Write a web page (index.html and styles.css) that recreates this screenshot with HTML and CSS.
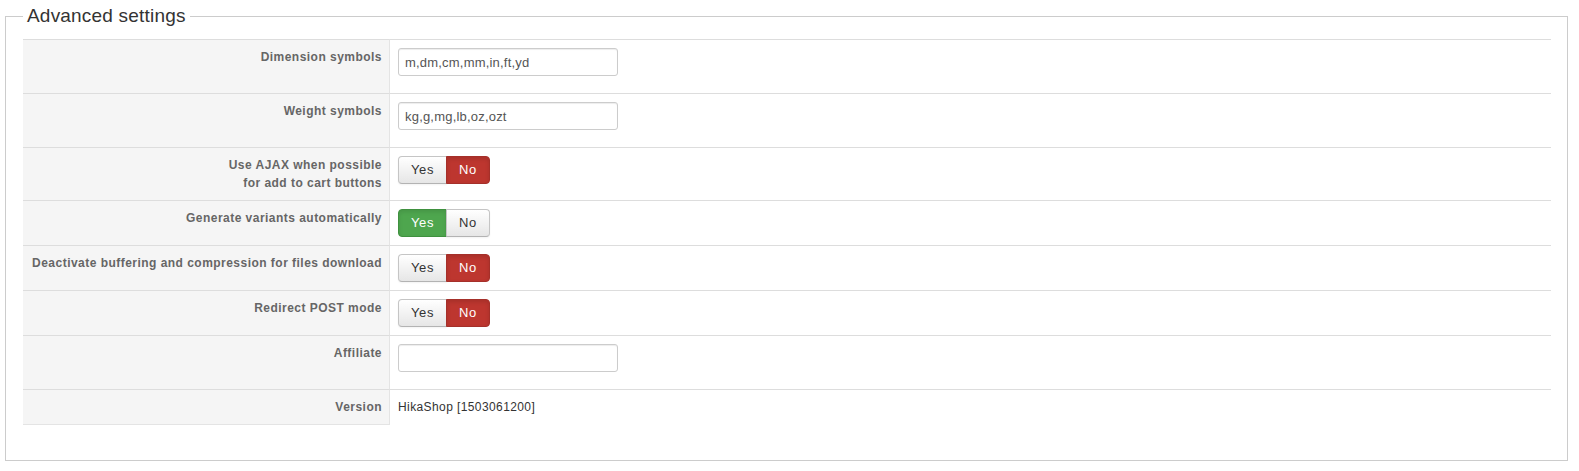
FILE: index.html
```html
<!DOCTYPE html>
<html>
<head>
<meta charset="utf-8">
<link rel="stylesheet" href="styles.css">
</head>
<body>
<fieldset class="settings">
  <legend class="settings-title">Advanced settings</legend>
  <table class="admintable">
    <tr>
      <td class="key">Dimension symbols</td>
      <td class="value"><input class="text-input" type="text" value="m,dm,cm,mm,in,ft,yd"></td>
    </tr>
    <tr>
      <td class="key">Weight symbols</td>
      <td class="value"><input class="text-input" type="text" value="kg,g,mg,lb,oz,ozt"></td>
    </tr>
    <tr>
      <td class="key">Use AJAX when possible<br>for add to cart buttons</td>
      <td class="value"><div class="toggle"><span class="btn">Yes</span><span class="btn btn-no-active">No</span></div></td>
    </tr>
    <tr>
      <td class="key">Generate variants automatically</td>
      <td class="value"><div class="toggle"><span class="btn btn-yes-active">Yes</span><span class="btn">No</span></div></td>
    </tr>
    <tr>
      <td class="key">Deactivate buffering and compression for files download</td>
      <td class="value"><div class="toggle"><span class="btn">Yes</span><span class="btn btn-no-active">No</span></div></td>
    </tr>
    <tr>
      <td class="key">Redirect POST mode</td>
      <td class="value"><div class="toggle"><span class="btn">Yes</span><span class="btn btn-no-active">No</span></div></td>
    </tr>
    <tr>
      <td class="key">Affiliate</td>
      <td class="value"><input class="text-input" type="text" value=""></td>
    </tr>
    <tr>
      <td class="key">Version</td>
      <td class="value version">HikaShop [1503061200]</td>
    </tr>
  </table>
</fieldset>
</body>
</html>
```

FILE: styles.css
```css
html, body {
  margin: 0;
  padding: 0;
  background: #fff;
}
body {
  font-family: "Liberation Sans", Arial, Helvetica, sans-serif;
  font-size: 12px;
  color: #333;
}
.settings {
  margin: 6px 11px 0 5px;
  padding: 13px 16px 35px 17px;
  border: 1px solid #cccccc;
  min-width: 0;
}
.settings-title {
  padding: 0 4px;
  font-size: 19px;
  line-height: 20px;
  letter-spacing: 0.2px;
  color: #333;
  font-weight: normal;
}
.admintable {
  width: 100%;
  border-collapse: separate;
  border-spacing: 0;
}
.admintable td {
  border-top: 1px solid #dddddd;
  padding: 8px;
  vertical-align: top;
  line-height: 18px;
}
.admintable td.key {
  width: 351px;
  background: #f5f5f5;
  text-align: right;
  font-weight: bold;
  color: #666;
  letter-spacing: 0.47px;
  white-space: nowrap;
  border-right: 1px solid #e4e4e4;
  padding-right: 7px;
}
.admintable td.value {
  padding-left: 8px;
}
.admintable tr:last-child td.key {
  border-bottom: 1px solid #e4e4e4;
}
.text-input {
  display: block;
  box-sizing: border-box;
  width: 220px;
  height: 28px;
  margin: 0 0 9px 0;
  padding: 4px 6px;
  border: 1px solid #cccccc;
  border-radius: 3px;
  box-shadow: inset 0 1px 1px rgba(0,0,0,0.075);
  font-family: "Liberation Sans", Arial, sans-serif;
  font-size: 13px;
  line-height: 18px;
  color: #555;
  letter-spacing: 0.2px;
  background: #fff;
}
.toggle {
  display: flex;
}
.btn {
  box-sizing: border-box;
  height: 28px;
  padding: 4px 12px;
  font-size: 13px;
  line-height: 18px;
  letter-spacing: 0.6px;
  color: #333;
  border: 1px solid #c5c5c5;
  border-bottom-color: #b3b3b3;
  background: linear-gradient(#ffffff, #e6e6e6);
  box-shadow: inset 0 1px 0 rgba(255,255,255,0.2), 0 1px 2px rgba(0,0,0,0.05);
}
.btn:first-child {
  border-radius: 4px 0 0 4px;
}
.btn:last-child {
  border-radius: 0 4px 4px 0;
  margin-left: -1px;
}
.btn-no-active {
  background: #bd362f;
  color: #fff;
  border-color: #a5302a;
  box-shadow: inset 0 2px 4px rgba(0,0,0,0.12);
}
.btn-yes-active {
  background: #4ea64e;
  color: #fff;
  border-color: #3f913f;
  box-shadow: inset 0 2px 4px rgba(0,0,0,0.1);
}
.version {
  letter-spacing: 0.4px;
  color: #333;
}
```
